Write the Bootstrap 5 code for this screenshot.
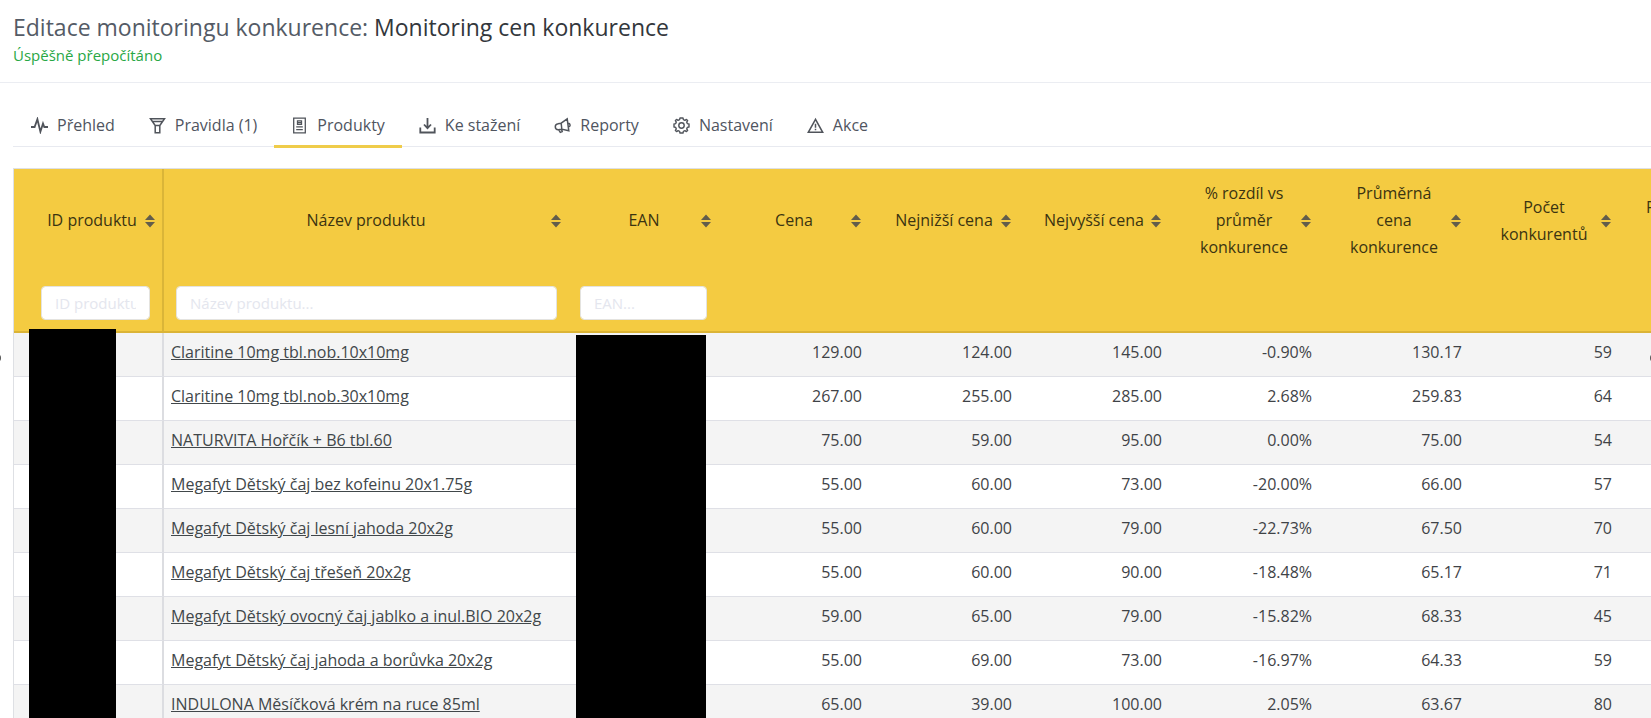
<!DOCTYPE html>
<html lang="cs">
<head>
<meta charset="utf-8">
<meta name="viewport" content="width=device-width, initial-scale=1">
<title>Monitoring cen konkurence</title>
<link href="https://cdn.jsdelivr.net/npm/bootstrap@5.3.0/dist/css/bootstrap.min.css" rel="stylesheet">
<style>
body{font-family:"Open Sans",sans-serif;font-size:16px;color:#3f4347;background:#fff}
.page-head{padding:12px 13px 15px;border-bottom:1px solid #ebedf2}
.page-head h1{font-size:23px;line-height:31px;font-weight:400;color:#545b66}
.page-head h1 span{color:#33373c}
.page-head p{font-size:15px;line-height:24px;color:#28a745}
.page-main{padding:22px 0 0 13px}
.tabs{border-bottom:1px solid #e8eaf0;padding-left:1px}
.tabs .nav-link{color:#50555f;padding:8px 17px;line-height:24px;border-bottom:3px solid transparent;margin-bottom:-2px;font-size:16px}
.tabs .nav-link.active{border-bottom-color:#efcc4a}
.tabs svg{width:17px;height:17px;margin-right:9px;fill:none;stroke:#50545b;stroke-width:1.8}
.grid-wrap{margin-top:21px;border:1px solid #dee0e4;border-right:0;border-bottom:0}
.grid{width:1756px;table-layout:fixed;border-collapse:separate;border-spacing:0}
.grid th{font-weight:400;background:#f4cb41;color:#3b3411}
.titles th{height:104px;line-height:27px;padding:11px 7px 12px 22px}
.titles th:first-child{padding-left:30px;padding-right:5px}
.sort-title{width:100%;text-align:center}
.sort-btn{width:10px;height:14px;flex:none;border:0;padding:0;background:none;display:flex;margin:0 2px 0 5px}
.sort-btn svg{width:10px;height:14px;fill:#625d4b}
.filters th{height:60px;padding:13px 13px 11px 10px;border-bottom:2px solid #dbb436}
.filters th:first-child{padding-left:27px;padding-right:12px}
.filters th:nth-child(2){padding-left:12px}
.filters .form-control{height:34px;font-size:15px;padding:4px 13px;border:1px solid #e4e3df;border-radius:4px}
.filters .form-control::placeholder{color:#e4e6ee}
.grid th:first-child{border-right:2px solid #dab538}
.grid td{height:44px;line-height:24px;padding:7px 8px 12px 7px;border-bottom:1px solid #dfe0e6;text-align:right;white-space:nowrap;vertical-align:top}
.grid td:first-child{border-right:2px solid #dcdde1}
.grid td:nth-child(2){text-align:left}
.grid td a{color:#41474a}
.grid tbody tr:nth-child(odd) td{background:#f4f4f4}
.redact{position:absolute;background:#000;bottom:0}
.redact-id{left:15px;width:87px;top:160px}
.redact-ean{left:562px;width:130px;top:166px}
.edge-dot{position:absolute;top:50%;width:8px;height:8px;margin-top:-5px;border-radius:50%;background:#555}
.edge-dot-start{left:-7px}
.edge-dot-end{right:-7px}
</style>
</head>
<body>
<div class="d-flex flex-column vh-100 overflow-hidden position-relative">
<header class="page-head">
<h1 class="m-0">Editace monitoringu konkurence: <span>Monitoring cen konkurence</span></h1>
<p class="m-0">Úspěšně přepočítáno</p>
</header>
<main class="page-main flex-grow-1 d-flex flex-column overflow-hidden">
<nav class="nav tabs flex-nowrap flex-shrink-0">
<a class="nav-link d-flex align-items-center" href="#"><svg viewBox="0 0 17 17"><path d="M0 10h3.600L6.400 2.200l3 12.500L12 6.500l1.300 3.500H17"/></svg>Přehled</a>
<a class="nav-link d-flex align-items-center" href="#"><svg viewBox="0 0 17 17"><path d="M1.500 1.700h14L10.800 8.500v7.200H6.200V8.500zM3.500 4.500h10M6.500 8.500h4" stroke-width="1.500"/></svg>Pravidla (1)</a>
<a class="nav-link active d-flex align-items-center" href="#" aria-current="page"><svg viewBox="0 0 17 17"><path d="M2.700 1.200h11.600v14.600H2.700zM6.500 3.800h4v3.500h-4zM5.200 9.800h6.600M5.200 12.600h6.600M7 5.600h3" stroke-width="1.300"/></svg>Produkty</a>
<a class="nav-link d-flex align-items-center" href="#"><svg viewBox="0 0 17 17"><path d="M8.500 1v10M5 7.500l3.500 3.700L12 7.500M1.300 10.500v5h14.400v-5"/></svg>Ke stažení</a>
<a class="nav-link d-flex align-items-center" href="#"><svg viewBox="0 0 17 17"><path d="M7.200 6.200 13.200 1.800 14.800 13.800 7.800 12.200zM7.200 6.200 4 6.800C.2 7.400.5 12.800 4.300 12.700l3.500-.5M14 6.300c2.600 0 2.800 3.300.5 3.600M4.600 12.700l1.700 2.600 1.900-.8-.7-2.300" stroke-width="1.500"/></svg>Reporty</a>
<a class="nav-link d-flex align-items-center" href="#"><svg viewBox="0 0 17 17"><path d="m7 1-.4 1.700-1.500.6L3.600 2.400 2.400 3.600l.9 1.500-.6 1.500L1 7v3l1.700.4.6 1.500-.9 1.500 1.200 1.200 1.500-.9 1.500.6L7 16h3l.4-1.700 1.500-.6 1.500.9 1.200-1.200-.9-1.500.6-1.500L16 10V7l-1.700-.4-.6-1.500.9-1.500-1.200-1.200-1.500.9-1.500-.6L10 1z" stroke-width="1.400" stroke-linejoin="round"/><circle cx="8.500" cy="8.500" r="2.700" stroke-width="1.400"/></svg>Nastavení</a>
<a class="nav-link d-flex align-items-center" href="#"><svg viewBox="0 0 17 17"><path d="M8.500 2.300 1.300 15.300h14.400zM8.500 6.800v4M8.500 11.800v1.500" stroke-width="1.500"/></svg>Akce</a>
</nav>
<div class="grid-wrap position-relative flex-grow-1 overflow-hidden">
<table class="grid">
<colgroup><col style="width:150px"><col style="width:406px"><col span="8" style="width:150px"></colgroup>
<thead><tr class="titles"></tr>
<tr class="filters">
<th><input class="form-control" type="text" placeholder="ID produktu..." aria-label="ID produktu"></th>
<th><input class="form-control" type="text" placeholder="Název produktu..." aria-label="Název produktu"></th>
<th><input class="form-control" type="text" placeholder="EAN..." aria-label="EAN"></th>
<th></th><th></th><th></th><th></th><th></th><th></th><th></th>
</tr></thead>
<tbody></tbody>
</table>
<div class="redact redact-id"></div>
<div class="redact redact-ean"></div>
</div>
</main>
<span class="edge-dot edge-dot-start"></span>
<span class="edge-dot edge-dot-end"></span>
</div>
<script src="https://cdn.jsdelivr.net/npm/bootstrap@5.3.0/dist/js/bootstrap.bundle.min.js"></script>
<script>
const titles = ['ID produktu','Název produktu','EAN','Cena','Nejnižší cena','Nejvyšší cena','% rozdíl vs průměr konkurence','Průměrná cena konkurence','Počet konkurentů','Počet nižších cen'];
document.querySelector('.titles').innerHTML = titles.map(t =>
  `<th scope="col"><div class="d-flex align-items-center"><span class="sort-title">${t}</span><button class="sort-btn" type="button" aria-label="Seřadit"><svg viewBox="0 0 10 14"><path d="M0 6 5 .5 10 6zM0 8h10l-5 5.500z"/></svg></button></div></th>`).join('');
const rows = [
  ['Claritine 10mg tbl.nob.10x10mg','129.00','124.00','145.00','-0.90%','130.17','59'],
  ['Claritine 10mg tbl.nob.30x10mg','267.00','255.00','285.00','2.68%','259.83','64'],
  ['NATURVITA Hořčík + B6 tbl.60','75.00','59.00','95.00','0.00%','75.00','54'],
  ['Megafyt Dětský čaj bez kofeinu 20x1.75g','55.00','60.00','73.00','-20.00%','66.00','57'],
  ['Megafyt Dětský čaj lesní jahoda 20x2g','55.00','60.00','79.00','-22.73%','67.50','70'],
  ['Megafyt Dětský čaj třešeň 20x2g','55.00','60.00','90.00','-18.48%','65.17','71'],
  ['Megafyt Dětský ovocný čaj jablko a inul.BIO 20x2g','59.00','65.00','79.00','-15.82%','68.33','45'],
  ['Megafyt Dětský čaj jahoda a borůvka 20x2g','55.00','69.00','73.00','-16.97%','64.33','59'],
  ['INDULONA Měsíčková krém na ruce 85ml','65.00','39.00','100.00','2.05%','63.67','80']
];
document.querySelector('.grid tbody').innerHTML = rows.map(([name, ...nums]) =>
  `<tr><td></td><td><a href="#">${name}</a></td><td></td>${nums.map(n => `<td>${n}</td>`).join('')}<td></td></tr>`).join('');
</script>
</body>
</html>
